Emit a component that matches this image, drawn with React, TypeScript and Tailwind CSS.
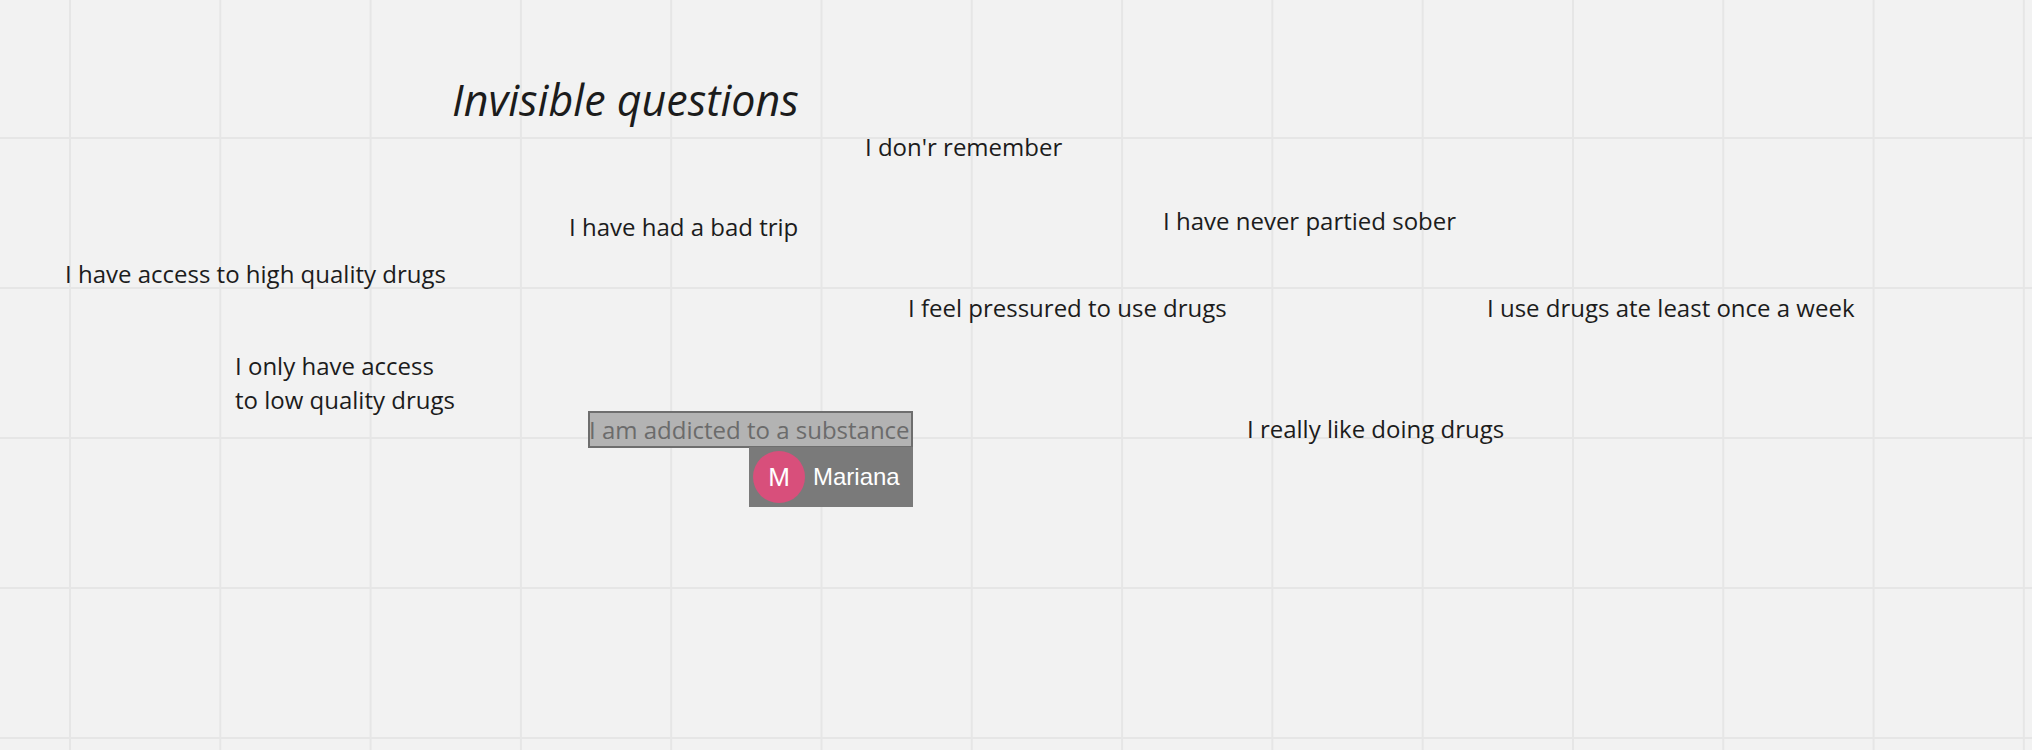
import React from "react";

const items: { text: string; x: number; y: number }[] = [
  { text: "I don'r remember", x: 865, y: 155 },
  { text: "I have had a bad trip", x: 569, y: 235 },
  { text: "I have never partied sober", x: 1163, y: 229 },
  { text: "I have access to high quality drugs", x: 65, y: 282 },
  { text: "I feel pressured to use drugs", x: 908, y: 316 },
  { text: "I use drugs ate least once a week", x: 1487, y: 316 },
  { text: "I really like doing drugs", x: 1247, y: 437 },
];

export default function App() {
  return (
    <div
      className="relative w-[2032px] h-[750px] overflow-hidden bg-[#f2f2f2] text-[#1c1c1c]"
      style={{ fontFamily: '"Open Sans", sans-serif' }}
    >
      <div className="absolute inset-0 bg-[linear-gradient(to_right,#e6e6e6_2px,transparent_2px),linear-gradient(to_bottom,#e6e6e6_2px,transparent_2px)] bg-[size:150.3px_150px] bg-[position:69px_137px]" />

      <div className="absolute left-[452px] top-[78px] text-[43px] italic leading-none whitespace-nowrap">
        Invisible questions
      </div>

      {items.map((it) => (
        <div
          key={it.text}
          className="absolute text-[24px] leading-[34px] whitespace-nowrap"
          style={{ left: it.x, top: it.y - 25 }}
        >
          {it.text}
        </div>
      ))}

      <div className="absolute left-[235px] top-[349px] text-[24px] leading-[34px] whitespace-nowrap">
        <div>I only have access</div>
        <div>to low quality drugs</div>
      </div>

      <div className="absolute left-[588px] top-[411px] w-[325px] h-[37px] bg-[#b3b3b3] border-2 border-[#6e6e6e] flex items-center overflow-hidden">
        <span className="text-[24px] leading-none whitespace-nowrap text-[#6b6b6b] -ml-[1px]">
          I am addicted to a substance
        </span>
      </div>

      <div className="absolute left-[749px] top-[447px] w-[164px] h-[60px] bg-[#7a7a7a] flex items-center gap-[8px] pl-[4px]">
        <div
          className="w-[52px] h-[52px] rounded-full bg-[#d84f7b] flex items-center justify-center text-white text-[26px]"
          style={{ fontFamily: '"Liberation Sans", Arial, sans-serif' }}
        >
          M
        </div>
        <span
          className="text-white text-[24px]"
          style={{ fontFamily: '"Liberation Sans", Arial, sans-serif' }}
        >
          Mariana
        </span>
      </div>
    </div>
  );
}
